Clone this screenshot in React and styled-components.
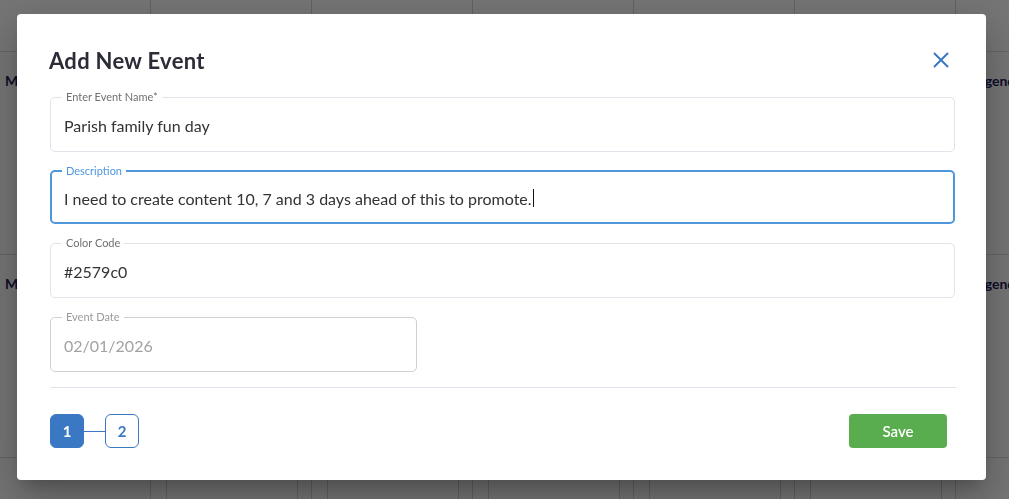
import styled, { createGlobalStyle } from "styled-components";

const GlobalStyle = createGlobalStyle`
  * { box-sizing: border-box; }
  html, body { margin: 0; padding: 0; background: #fff; }
  body { font-family: Lato, "Noto Sans", Arial, sans-serif; overflow: hidden; }
`;

// calendar that sits behind the backdrop
const weeks = [
  ["Mass", "", "", "", "", "", "Agenda"],
  ["Mass", "", "", "", "", "", "Agenda"],
  ["", "card", "card", "card", "card", "card", ""],
];

const Calendar = styled.div`
  margin-left: -10px;
  width: 1127px;
`;

const HeaderRow = styled.div`
  height: 52px;
  display: grid;
  grid-template-columns: repeat(7, 161px);
  border-bottom: 1px solid #dcdce4;
`;

const WeekRow = styled.div`
  height: 203px;
  display: grid;
  grid-template-columns: repeat(7, 161px);
  border-bottom: 1px solid #dcdce4;
`;

const Cell = styled.div`
  border-right: 1px solid #d6d6de;
  padding: 20px 15px 0 ${(p) => (p.$last ? "19px" : "15px")};
  font-size: 14px;
  font-weight: 700;
  color: #1c1c5a;
  white-space: nowrap;
  overflow: hidden;
`;

const CellCard = styled.div`
  margin: -4px -2px 0 0;
  height: 54px;
  border: 1px solid #cfd3da;
  border-radius: 6px;
`;

const Backdrop = styled.div`
  position: fixed;
  inset: 0;
  background: rgba(0, 0, 0, 0.54);
  display: flex;
  align-items: flex-start;
  justify-content: flex-start;
  padding: 14px 0 0 17px;
`;

const Modal = styled.div`
  width: 969px;
  background: #fff;
  border-radius: 4px;
  padding: 31px 31px 32px 33px;
  box-shadow: 0 11px 15px -7px rgba(0, 0, 0, 0.2),
    0 24px 38px 3px rgba(0, 0, 0, 0.14), 0 9px 46px 8px rgba(0, 0, 0, 0.12);
`;

const Header = styled.div`
  display: flex;
  align-items: center;
  justify-content: space-between;
  height: 30px;
  margin-bottom: 16px;
`;

const Title = styled.h2`
  margin: 0 0 0 -1px;
  font-size: 22px;
  font-weight: 700;
  color: #2c2c38;
  letter-spacing: 0.3px;
`;

const CloseButton = styled.button`
  border: none;
  background: none;
  padding: 0;
  margin-right: 4px;
  width: 20px;
  height: 20px;
  display: flex;
  align-items: center;
  justify-content: center;
  cursor: pointer;
`;

const Fields = styled.div`
  display: flex;
  flex-direction: column;
  gap: 13px;
`;

const Field = styled.fieldset`
  margin: 0;
  width: ${(p) => p.$width || "100%"};
  padding: 5px 10px 9px 9px;
  border: ${(p) => (p.$focused ? "2px solid #4f97dc" : `1px solid ${p.$muted ? "#cfcfd4" : "#e2e2ea"}`)};
  border-radius: 5px;
  ${(p) => p.$focused && "padding: 4px 9px 7px 8px;"}
`;

const Legend = styled.legend`
  margin-left: 2px;
  padding: 0 4px;
  font-size: 11px;
  line-height: 12px;
  color: ${(p) => (p.$focused ? "#4f97dc" : p.$muted ? "#9a9a9a" : "#707070")};
`;

const Value = styled.div`
  height: 34px;
  padding-left: 4px;
  display: flex;
  align-items: center;
  font-size: 16px;
  color: ${(p) => (p.$muted ? "#a2a2a2" : "#333")};
`;

const Caret = styled.span`
  display: inline-block;
  width: 1px;
  height: 18px;
  background: #111;
  margin-left: 1px;
`;

const Divider = styled.hr`
  margin: 15px -1px 26px 0;
  border: none;
  border-top: 1px solid #e2e2ec;
`;

const Footer = styled.div`
  display: flex;
  align-items: center;
  justify-content: space-between;
  padding-right: 8px;
`;

const Steps = styled.div`
  display: flex;
  align-items: center;
`;

const Step = styled.div`
  width: 34px;
  height: 34px;
  border-radius: 6px;
  display: flex;
  align-items: center;
  justify-content: center;
  font-size: 15px;
  font-weight: 700;
  border: 1px solid #3b78c4;
  background: ${(p) => (p.$active ? "#3b78c4" : "#fff")};
  color: ${(p) => (p.$active ? "#fff" : "#3b78c4")};
`;

const StepLine = styled.div`
  width: 21px;
  height: 1px;
  background: #3b78c4;
`;

const SaveButton = styled.button`
  width: 98px;
  height: 34px;
  border: none;
  border-radius: 4px;
  background: #5aad4f;
  color: #fff;
  font-family: inherit;
  font-size: 15px;
  font-weight: 600;
  cursor: pointer;
`;

export default function App() {
  return (
    <>
      <GlobalStyle />
      <Calendar>
        <HeaderRow>
          {Array.from({ length: 7 }).map((_, i) => (
            <Cell key={i} />
          ))}
        </HeaderRow>
        {weeks.map((week, w) => (
          <WeekRow key={w}>
            {week.map((item, i) => (
              <Cell key={i} $last={i === 6}>
                {item === "card" ? <CellCard /> : item}
              </Cell>
            ))}
          </WeekRow>
        ))}
      </Calendar>

      <Backdrop>
        <Modal>
          <Header>
            <Title>Add New Event</Title>
            <CloseButton aria-label="close">
              <svg width="16" height="16" viewBox="0 0 16 16">
                <path d="M1.5 1.5 L14.5 14.5 M14.5 1.5 L1.5 14.5" stroke="#3b78c4" strokeWidth="2" strokeLinecap="round" />
              </svg>
            </CloseButton>
          </Header>

          <Fields>
            <Field>
              <Legend>Enter Event Name*</Legend>
              <Value>Parish family fun day</Value>
            </Field>
            <Field $focused>
              <Legend $focused>Description</Legend>
              <Value>
                I need to create content 10, 7 and 3 days ahead of this to promote.
                <Caret />
              </Value>
            </Field>
            <Field>
              <Legend>Color Code</Legend>
              <Value>#2579c0</Value>
            </Field>
            <Field $width="367px" $muted>
              <Legend $muted>Event Date</Legend>
              <Value $muted>02/01/2026</Value>
            </Field>
          </Fields>

          <Divider />

          <Footer>
            <Steps>
              <Step $active>1</Step>
              <StepLine />
              <Step>2</Step>
            </Steps>
            <SaveButton>Save</SaveButton>
          </Footer>
        </Modal>
      </Backdrop>
    </>
  );
}
